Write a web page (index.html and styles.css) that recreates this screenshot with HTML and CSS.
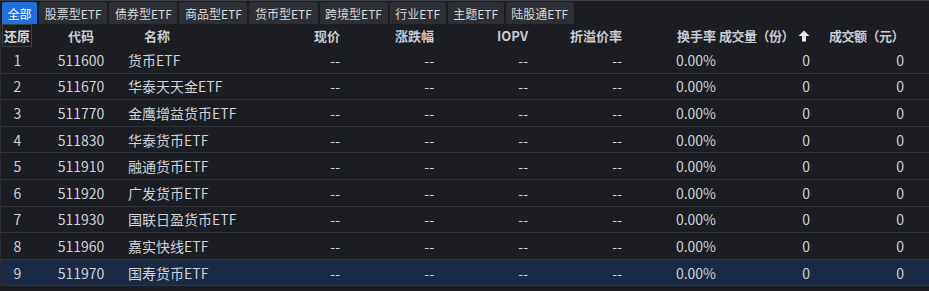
FILE: index.html
```html
<!DOCTYPE html>
<html lang="zh-CN">
  <head>
    <meta charset="UTF-8" />
    <title>ETF</title>
    <link rel="stylesheet" href="styles.css">
  </head>
  <body>
    <div class="tabs">
      <span class="tab active">全部</span>
      <span class="tab">股票型ETF</span>
      <span class="tab">债券型ETF</span>
      <span class="tab">商品型ETF</span>
      <span class="tab">货币型ETF</span>
      <span class="tab">跨境型ETF</span>
      <span class="tab">行业ETF</span>
      <span class="tab">主题ETF</span>
      <span class="tab">陆股通ETF</span>
    </div>
    <div class="grid">
      <div class="row head">
        <div class="c-no"><span class="reset">还原</span></div>
        <div class="c-code">代码</div>
        <div class="c-name">名称</div>
        <div class="c-num">现价</div>
        <div class="c-num">涨跌幅</div>
        <div class="c-num">IOPV</div>
        <div class="c-num">折溢价率</div>
        <div class="c-num">换手率</div>
        <div class="c-num tight">成交量（份）<svg class="arrow" width="12" height="12" viewBox="0 0 12 12"><path d="M6 0.5 L11.5 6 L8 6 L8 11.5 L4 11.5 L4 6 L0.5 6 Z" fill="#e6e8ec"/></svg></div>
        <div class="c-num tight">成交额（元）</div>
      </div>
      <div class="row">
        <div class="c-no">1</div><div class="c-code">511600</div><div class="c-name">货币ETF</div>
        <div class="c-num">--</div><div class="c-num">--</div><div class="c-num">--</div><div class="c-num">--</div>
        <div class="c-num">0.00%</div><div class="c-num">0</div><div class="c-num">0</div>
      </div>
      <div class="row">
        <div class="c-no">2</div><div class="c-code">511670</div><div class="c-name">华泰天天金ETF</div>
        <div class="c-num">--</div><div class="c-num">--</div><div class="c-num">--</div><div class="c-num">--</div>
        <div class="c-num">0.00%</div><div class="c-num">0</div><div class="c-num">0</div>
      </div>
      <div class="row">
        <div class="c-no">3</div><div class="c-code">511770</div><div class="c-name">金鹰增益货币ETF</div>
        <div class="c-num">--</div><div class="c-num">--</div><div class="c-num">--</div><div class="c-num">--</div>
        <div class="c-num">0.00%</div><div class="c-num">0</div><div class="c-num">0</div>
      </div>
      <div class="row">
        <div class="c-no">4</div><div class="c-code">511830</div><div class="c-name">华泰货币ETF</div>
        <div class="c-num">--</div><div class="c-num">--</div><div class="c-num">--</div><div class="c-num">--</div>
        <div class="c-num">0.00%</div><div class="c-num">0</div><div class="c-num">0</div>
      </div>
      <div class="row">
        <div class="c-no">5</div><div class="c-code">511910</div><div class="c-name">融通货币ETF</div>
        <div class="c-num">--</div><div class="c-num">--</div><div class="c-num">--</div><div class="c-num">--</div>
        <div class="c-num">0.00%</div><div class="c-num">0</div><div class="c-num">0</div>
      </div>
      <div class="row">
        <div class="c-no">6</div><div class="c-code">511920</div><div class="c-name">广发货币ETF</div>
        <div class="c-num">--</div><div class="c-num">--</div><div class="c-num">--</div><div class="c-num">--</div>
        <div class="c-num">0.00%</div><div class="c-num">0</div><div class="c-num">0</div>
      </div>
      <div class="row">
        <div class="c-no">7</div><div class="c-code">511930</div><div class="c-name">国联日盈货币ETF</div>
        <div class="c-num">--</div><div class="c-num">--</div><div class="c-num">--</div><div class="c-num">--</div>
        <div class="c-num">0.00%</div><div class="c-num">0</div><div class="c-num">0</div>
      </div>
      <div class="row">
        <div class="c-no">8</div><div class="c-code">511960</div><div class="c-name">嘉实快线ETF</div>
        <div class="c-num">--</div><div class="c-num">--</div><div class="c-num">--</div><div class="c-num">--</div>
        <div class="c-num">0.00%</div><div class="c-num">0</div><div class="c-num">0</div>
      </div>
      <div class="row selected">
        <div class="c-no">9</div><div class="c-code">511970</div><div class="c-name">国寿货币ETF</div>
        <div class="c-num">--</div><div class="c-num">--</div><div class="c-num">--</div><div class="c-num">--</div>
        <div class="c-num">0.00%</div><div class="c-num">0</div><div class="c-num">0</div>
      </div>
    </div>
  </body>
</html>
```

FILE: styles.css
```css
body {
  margin: 0;
  height: 291px;
  overflow: hidden;
  background-color: #1b1d22;
  color: #cfd2d7;
  font-family: "Noto Sans CJK SC", "Noto Sans", sans-serif;
  font-size: 14px;
  border-top: 1px solid #3a3d43;
}

.tabs {
  display: flex;
  gap: 2px;
  padding: 1px 0 0 2px;
  height: 22px;
}

.tab {
  display: flex;
  align-items: center;
  padding: 0 5.6px;
  background-color: #2d2f35;
  color: #d8dadd;
  font-size: 12px;
  border-radius: 2px 2px 0 0;
}

.tab.active {
  background-color: #1f6fdc;
  color: #ffffff;
}

.grid {
  border-left: 1px solid #2a2c31;
}

.row {
  display: grid;
  grid-template-columns: 33px 94px 118px repeat(7, 94px);
  height: 26.6px;
  box-sizing: border-box;
  border-bottom: 1px solid #30333a;
  align-items: center;
  white-space: nowrap;
  line-height: 18px;
}

.row.head {
  height: 23px;
  border-bottom: none;
  font-size: 13px;
  font-weight: bold;
  color: #c9ccd2;
}

.row.selected {
  background-color: #1a2a45;
}

.c-no {
  text-align: center;
}

.c-code {
  text-align: center;
}

.head .c-name {
  padding-left: 16px;
}

.c-num {
  text-align: right;
}

.tight {
  letter-spacing: -0.5px;
}

.reset {
  display: flex;
  align-items: center;
  justify-content: center;
  width: 30px;
  height: 23px;
  box-sizing: border-box;
  margin-left: 1px;
  border: 1px solid #3e4148;
  color: #d6d8dc;
}

.arrow {
  margin-left: 4px;
  vertical-align: -1px;
}
```
